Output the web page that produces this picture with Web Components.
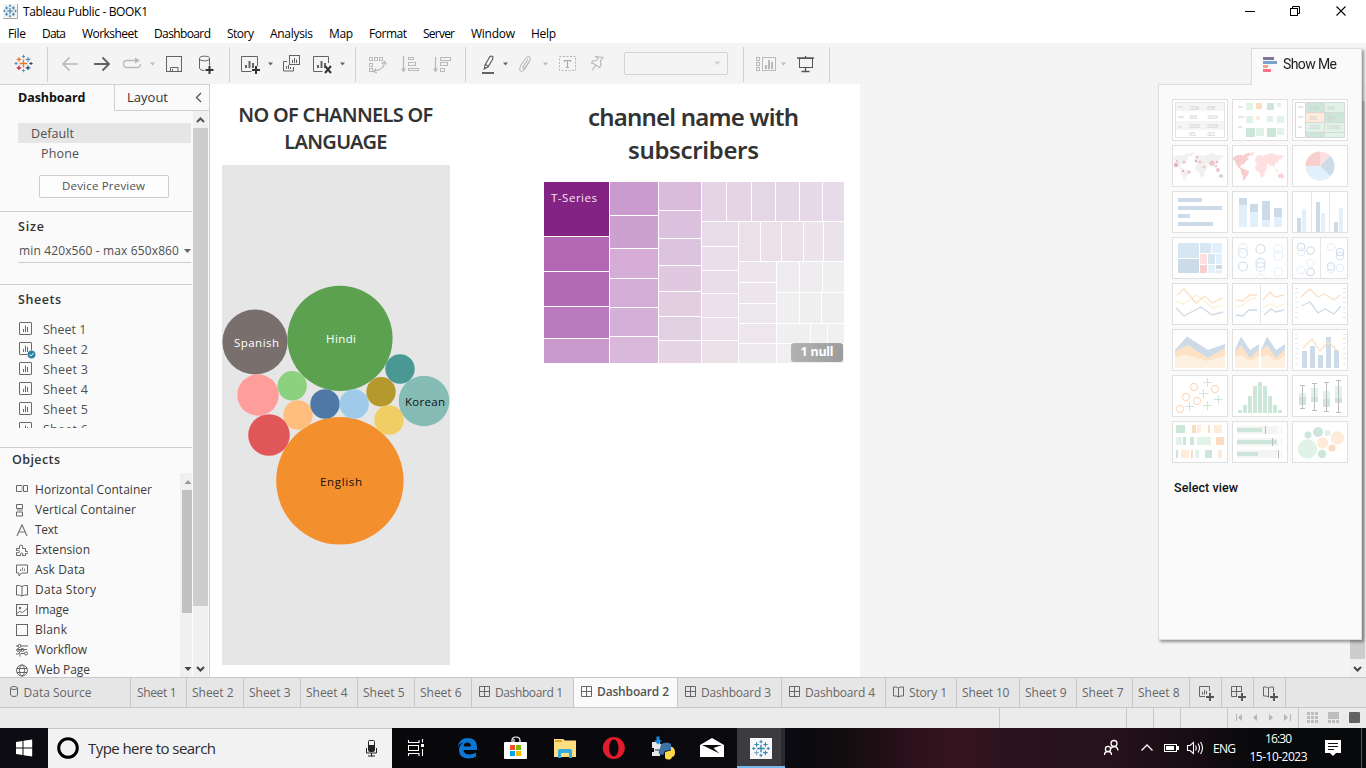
<!DOCTYPE html>
<html lang="en">
<head>
<meta charset="utf-8">
<title>Tableau Public - BOOK1</title>
<style>
html,body{margin:0;padding:0;width:1366px;height:768px;overflow:hidden;background:#fff;font-family:"Open Sans","Noto Sans",sans-serif}
</style>
</head>
<body>
<tp-app></tp-app>
<script>
/* Lays drawings and labels out left to right; every item knows its start and width on the bar. */
function strip(start, items, top, height) {
  let at = start, out = '';
  for (const it of items) {
    const ml = (it.x - at).toFixed(2);
    if (it.t !== undefined) {
      out += `<fit-text w="${it.w}" style="margin-left:${ml}px;${it.s || ''}">${it.t}</fit-text>`;
    } else if (it.sep) {
      out += `<i class="sep" style="margin-left:${ml}px"></i>`;
      it.w = 1;
    } else {
      out += svg(it.x, top, it.w, height, it.g, `margin-left:${ml}px`);
    }
    at = it.x + it.w;
  }
  return out;
}
function svg(x, y, w, h, g, style = '') {
  return `<svg width="${w}" height="${h}" viewBox="${x} ${y} ${w} ${h}" style="flex:none;display:block;${style}" fill="none">${g}</svg>`;
}
const rect = (x, y, w, h, f, extra = '') => `<rect x="${x}" y="${y}" width="${w}" height="${h}" fill="${f}" ${extra}/>`;
const box = (x, y, w, h, c, sw = 1) => `<rect x="${x + .5}" y="${y + .5}" width="${w - 1}" height="${h - 1}" stroke="${c}" stroke-width="${sw}"/>`;
const line = (d, c, w = 1, e = '') => `<path d="${d}" stroke="${c}" stroke-width="${w}" ${e}/>`;
const fill = (d, c) => `<path d="${d}" fill="${c}"/>`;
const caret = (x, y, c, w = 5) => fill(`M${x - w / 2} ${y - 1.5}h${w}l${-w / 2} 3z`, c);
const plus = (cx, cy, r, c, w = 1) => line(`M${cx - r} ${cy}h${2 * r}M${cx} ${cy - r}v${2 * r}`, c, w);
function logo(cx, cy, k, c) {
  return plus(cx, cy, 3.6 * k, c[0], 1.3 * k) +
    [[0, -6.5, 1], [0, 6.5, 2], [-6.9, 0, 1], [6.9, 0, 3]].map(p => plus(cx + p[0] * k, cy + p[1] * k, 1.5 * k, c[p[2]], k)).join('') +
    [[-4.2, -3.8, 0], [4.2, -3.8, 1], [-4.2, 4, 4], [4.2, 4, 3]].map(p => plus(cx + p[0] * k, cy + p[1] * k, 2.1 * k, c[p[2]], 1.1 * k)).join('');
}

class FitText extends HTMLElement {
  connectedCallback() {
    if (!this.shadowRoot) {
      this.attachShadow({mode: 'open'}).innerHTML = '<style>:host{display:inline-block;white-space:nowrap;flex:none}</style><slot></slot>';
    }
    const want = +this.getAttribute('w');
    this.style.letterSpacing = '0px';
    const r = document.createRange();
    r.selectNodeContents(this);
    const nat = r.getBoundingClientRect().width;
    const n = this.textContent.length;
    this.style.letterSpacing = ((want - nat) / Math.max(1, n - 1)).toFixed(3) + 'px';
    this.style.width = want + 'px';
  }
}
customElements.define('fit-text', FitText);

function define(name, render) {
  customElements.define(name, class extends HTMLElement {
    connectedCallback() {
      if (!this.shadowRoot) this.attachShadow({mode: 'open'}).innerHTML = render(this);
    }
  });
}

define('tp-title', () => `<style>:host{display:flex;height:23px;background:#fff;align-items:center;font-size:12px;color:#000}</style>` +
  strip(0, [
    {x: 3, w: 16, g: rect(3, 4, 15, 15, '#f3f3f3') + line('M17.5 4v14.5H3', '#aaa') + logo(10, 11, .8, ['#2f7fae', '#2f7fae', '#2f7fae', '#2f7fae', '#2f7fae'])},
    {x: 23, w: 125, t: 'Tableau Public - BOOK1'},
    {x: 1244, w: 12, g: line('M1245 11.5h10', '#000')},
    {x: 1289, w: 12, g: box(1290, 8, 8, 8, '#000') + line('M1292.5 8v-1.500h7v7h-1.500', '#000')},
    {x: 1335, w: 12, g: line('M1336.500 6.500l9 9m0-9l-9 9', '#000', 1.1)}
  ], 0, 23));

define('tp-menu', () => `<style>:host{display:flex;height:20px;background:#fff;padding-left:8px;gap:16px;font-size:12px;line-height:21px;color:#000}</style>` +
  [['File', 18], ['Data', 24], ['Worksheet', 56], ['Dashboard', 57], ['Story', 27], ['Analysis', 43], ['Map', 24], ['Format', 38], ['Server', 32], ['Window', 44], ['Help', 25]]
    .map(m => `<fit-text w="${m[1]}">${m[0]}</fit-text>`).join(''));

define('tp-toolbar', () => {
  const D = '#636363', L = '#b9b9b9';
  const bars = (x, y, c) => rect(x, y + 5, 2, 3, c) + rect(x + 3.500, y + 1, 2, 7, c) + rect(x + 7, y + 3, 2, 5, c);
  return `<style>:host{display:flex;height:41px;background:#f4f4f4;align-items:center}.sep{flex:none;width:1px;height:35px;background:#d0d0d0;margin-top:2px}
  .combo{flex:none;box-sizing:border-box;width:104px;height:23px;border:1px solid #d3d3d3;border-radius:2px;margin-left:19px;display:flex;align-items:center;justify-content:flex-end;padding-right:6px}</style>` +
  strip(0, [
    {x: 14, w: 20, g: logo(23.5, 63.5, 1.08, ['#e8762b', '#5b8db8', '#7099a6', '#1f457e', '#c72037'])},
    {x: 47, sep: 1},
    {x: 61, w: 18, g: line('M78 64H63M69.500 57.500L63 64l6.500 6.500', L, 1.7)},
    {x: 93, w: 18, g: line('M94 64h15M102.500 57.500L109 64l-6.500 6.500', D, 1.9)},
    {x: 122, w: 20, g: line('M137 60.500h-10q-3.500 0-3.500 3.500t3.500 3.500h10q3.500 0 3.500-3.500', L, 1.3) + fill('M135 57.500v6l5-3z', L)},
    {x: 148, w: 9, g: caret(152.5, 64, L)},
    {x: 166, w: 16, g: box(166, 56, 16, 16, D) + line('M170.500 72v-4.500h7.500v4.500M172.500 69v3', D)},
    {x: 198, w: 17, g: line('M199.500 58.500v10q1 2 5 2M209.500 58.500v7', D) + `<ellipse cx="204.500" cy="58.500" rx="5" ry="2.300" stroke="${D}"/>` + plus(209.500, 70, 4, '#333', 2)},
    {x: 229, sep: 1},
    {x: 241, w: 20, g: line('M257.500 66v-9.500h-16v15h10', D) + bars(245, 60, D) + plus(256, 70, 4, '#333', 2)},
    {x: 266, w: 9, g: caret(270.5, 64, D)},
    {x: 282, w: 18, g: box(289, 55, 11, 10, D) + line('M287 61.500h-3.500v9.500h10v-4', D) + line('M292.500 60v3M294.500 58v5M296.500 59.500v3.500M286.500 66v3M288.500 65v4M290.500 67v2', D)},
    {x: 313, w: 19, g: line('M328.500 63v-6.500h-15v15h9', D) + bars(317, 60, D) + line('M325 66l6 7m0-7l-6 7', '#333', 2)},
    {x: 338, w: 9, g: caret(342.5, 64, D)},
    {x: 355, sep: 1},
    {x: 368, w: 19, g: box(369, 57, 4, 4, L) + box(374, 57, 4, 4, L) + box(379, 57, 4, 4, L) + box(369, 63, 4, 4, L) + box(369, 68, 4, 4, L) + line('M384.500 62q0 7.500-10 9M381.500 64l3-2.500 2 3M376 68.500l-2.500 3 3.500 1.500', L, 1.2)},
    {x: 400, w: 19, g: line('M403.500 56v13', L, 1.3) + fill('M401 68.500h5l-2.500 4z', L) + box(408, 57, 6, 3, L) + box(408, 62, 8, 4, L) + box(408, 68, 11, 3, L)},
    {x: 432, w: 20, g: line('M435.500 57v12', L, 1.3) + fill('M433 68.500h5l-2.500 4z', L) + box(440, 57, 11, 4, L) + box(440, 62, 8, 4, L) + box(440, 68, 5, 4, L)},
    {x: 465, sep: 1},
    {x: 481, w: 14, g: line('M485 65l5-8.500q1.500-1 3 .5l-.5 2.500-4.500 7.500-3.500 1.500zM485.500 64.500l3 2', D, 1.2) + fill('M483 70l1.500-3 2 1.500z', D) + rect(482, 72, 12, 2, D)},
    {x: 501, w: 9, g: caret(505.5, 64, D)},
    {x: 518, w: 15, g: line('M528 59l-5 8q-.5 2 1 1.500 1-.5 6-8.500 1-3-1.500-3.500-2-.3-8 9.500-1.500 4 0 5 2 1 4-1.500l5-8', L, 1.1)},
    {x: 541, w: 9, g: caret(545.5, 64, L)},
    {x: 559, w: 17, g: `<rect x="559.500" y="56.500" width="16" height="14" stroke="${L}" stroke-dasharray="2 1.500"/>` + line('M564.500 62v-1.500h6v1.500M567.500 60.500v7M566 67.500h3', '#aaa', 1.2)},
    {x: 591, w: 14, g: line('M596 56.500l7 1-2.500 3.500.500 4.500-1.500 2-6-4-2-.5 1-2 4-.5 1.500-2zM595.500 65.500l-3.500 5', L, 1.2)}
  ], 43, 41) + `<span class="combo">${svg(0, 0, 7, 5, fill('M.5 .5h6l-3 3.500z', '#cfcfcf'))}</span>` +
  strip(728, [
    {x: 743, sep: 1},
    {x: 755, w: 22, g: box(756, 57, 4, 4, L) + box(756, 62, 4, 4, L) + box(756, 67, 4, 4, L) + box(762, 57, 14, 14, L) + rect(765, 65, 2, 4, L) + rect(768, 60, 2, 9, L) + rect(771, 62, 2, 7, L)},
    {x: 779, w: 9, g: caret(783.5, 64, L)},
    {x: 796, w: 20, g: line('M797 58h17M805.500 56v2M805.500 67v4.500M801.500 71.500h8', '#555', 1.3) + box(799, 58, 14, 10, '#555')},
    {x: 829, sep: 1}
  ], 43, 41);
});

const sheetIcon = `<g stroke="#6a6a6a"><rect x=".5" y=".5" width="12" height="12" rx=".5"/><path d="M4.500 7v3M6.500 3.500V10M8.500 5v5"/></g>`;

define('tp-sidebar', () => {
  const G = '#666';
  const obj = [
    ['Horizontal Container', 117, '<path d="M.5 1.500h5v6h-5zM7.500 1.500h4v6h-4z" stroke="#666"/><path d="M5 2h2v5H5z" fill="#ccc"/>'],
    ['Vertical Container', 101, '<path d="M.5 .5h6v4h-6zM.5 8h6v4h-6z" stroke="#666"/><path d="M1 5h6v2H1z" fill="#bbb"/>'],
    ['Text', 23, '<path d="M1 12L6 .8l5 11.200M2.800 8h6.400" stroke="#777" stroke-width="1.200"/>'],
    ['Extension', 55, '<path d="M.5 11.500v-3q3 1 3-1t-3-1V4.500h3q-1-3.500 1.500-3.500T6.500 4.500h3v3q2.500-.8 2.500 1t-2.500 1v2h-3q1-2.500-.8-2.500t-1 2.500z" stroke="#666"/>'],
    ['Ask Data', 50, '<path d="M.5 1h11v8h-6l-2.500 3V9H.5z" stroke="#666"/><path d="M4.500 7V5M6.500 7V3.500M8.500 7V4.500" stroke="#888"/>'],
    ['Data Story', 61, '<path d="M6 2.500Q3.500 1 .5 1.500v9.500q3-.5 5.500 1 2.500-1.500 5.500-1V1.500Q8.500 1 6 2.500zV12" stroke="#666"/>'],
    ['Image', 34, '<rect x=".5" y=".5" width="11" height="11" stroke="#666"/><path d="M1 9.500l2.500-2 3 1 4.500-4" stroke="#666"/><circle cx="4" cy="4" r="1.300" fill="#777"/>'],
    ['Blank', 32, '<rect x=".5" y=".5" width="11" height="11" stroke="#666"/>'],
    ['Workflow', 52, '<path d="M0 2h3M5 2h7M1 5.500h10M8.500 9.500H5M0 10h2.500l4-6" stroke="#666"/><circle cx="3.500" cy="2" r="1.500" stroke="#666"/><circle cx="10" cy="9.500" r="1.500" stroke="#666"/><circle cx="2" cy="6" r="1.300" stroke="#666"/><circle cx="6.500" cy="6" r="1.500" stroke="#666"/><path d="M4 9v3.500" stroke="#666"/>'],
    ['Web Page', 55, '<circle cx="6" cy="6.500" r="5.500" stroke="#666"/><ellipse cx="6" cy="6.500" rx="2.500" ry="5.500" stroke="#666"/><path d="M1 4.500h10M1 8.500h10" stroke="#666"/>']
  ];
  return `<style>
  :host{display:flex;flex-direction:column;width:209px;height:593px;border-right:1px solid #d0d0d0;background:#fafafa;color:#505050;font-size:12.5px;flex:none;overflow:hidden}
  *{box-sizing:border-box}
  .tabs{display:flex;height:27px;border-top:1px solid #d0d0d0;flex:none;color:#333;line-height:25px}
  .t1{width:114px;padding-left:18px;font-weight:700;color:#111}
  .t2{flex:1;border-left:1px solid #d0d0d0;border-bottom:1px solid #d0d0d0;padding-left:12px;display:flex;align-items:center;font-size:13px}
  .body{display:flex;flex:1;min-height:0}
  .col{width:193px;display:flex;flex-direction:column;flex:none}
  section{border-bottom:1px solid #ccc;width:192px;flex:none}
  .dev{height:101px;padding:12px 0 0 18px;line-height:20px}
  .sel{background:#e6e6e6;width:173px;padding-left:13px;height:20px;line-height:21px}
  .ph{padding-left:23px;height:20px;line-height:21px}
  .btn{margin:12px 0 0 21px;width:130px;height:23px;border:1px solid #ccc;border-radius:2px;background:#fdfdfd;font-size:11.5px;line-height:19px;padding-left:22px}
  b{display:block;font-weight:600;color:#333}
  .size{height:73px;padding:5px 0 0 18px;line-height:20px}
  .drop{width:173px;height:23px;margin-top:3px;border-bottom:1px solid #ccc;display:flex;align-items:center;font-size:12px;padding-left:1px}
  .sheets{height:163px;padding:5px 0 0 18px;line-height:20px}
  .list{height:109px;margin-top:9px;overflow:hidden}
  .li{height:20px;display:flex;align-items:center;gap:11px;padding-left:1px}
  .li fit-text{padding-top:2px}
  .ic{width:13px;height:14px;position:relative}
  .ok{position:absolute;left:8px;top:8px}
  .objs{display:flex;flex:1;min-height:0}
  .ol{width:180px;padding:7px 0 0 16px;color:#3a3a3a;font-size:12px}
  .ol div{height:20px;display:flex;align-items:center;gap:7px}
  .ol fit-text{padding-bottom:2px}
  .h2{height:25px;padding-left:12px;line-height:23px;flex:none}
  .sb{display:flex;flex-direction:column;align-items:center;background:#f0f0f0}
  .s1{width:12px;padding-top:6px}.s2{width:15px}
  </style>
  <div class="tabs"><div class="t1"><fit-text w="67.500">Dashboard</fit-text></div><div class="t2"><fit-text w="41">Layout</fit-text>${svg(0, 0, 7, 11, line('M6 1L1.500 5.500 6 10', '#555', 1.3), 'margin-left:27px')}</div></div>
  <div class="body"><div class="col">
   <section class="dev"><div class="sel"><fit-text w="43">Default</fit-text></div><div class="ph"><fit-text w="38">Phone</fit-text></div><div class="btn"><fit-text w="83">Device Preview</fit-text></div></section>
   <section class="size"><b><fit-text w="26">Size</fit-text></b><div class="drop"><fit-text w="160">min 420x560 - max 650x860</fit-text>${svg(0, 0, 7, 4, fill('M0 0h7l-3.500 4z', G), 'margin-left:5px')}</div></section>
   <section class="sheets"><b><fit-text w="43">Sheets</fit-text></b><div class="list">${[1, 2, 3, 4, 5, 6].map(n => `<div class="li"><span class="ic">${svg(0, 0, 13, 13, sheetIcon)}${n == 2 ? `<span class="ok">${svg(0, 0, 9, 9, '<circle cx="4.500" cy="4.500" r="4.300" fill="#2f7ea3" stroke="#fff" stroke-width=".6"/><path d="M2.500 4.500l1.500 1.500 2.500-3" stroke="#fff"/>')}</span>` : ''}</span><fit-text w="${n == 1 ? 43.5 : 45}">Sheet ${n}</fit-text></div>`).join('')}</div></section>
   <b class="h2"><fit-text w="48">Objects</fit-text></b>
   <div class="objs"><div class="ol">${obj.map(o => `<div>${svg(0, 0, 12, 13, o[2])}<fit-text w="${o[1]}">${o[0]}</fit-text></div>`).join('')}</div>
    <div class="sb s1">${svg(0, 0, 12, 198, fill('M4.500 5h7l-3.500-4z', '#999') + rect(2, 11, 10, 123, '#c1c1c1') + fill('M4.500 188h7l-3.500 4z', '#444'))}</div></div>
  </div>
  <div class="sb s2">${svg(193, 111, 15, 566, line('M197 122l3.500-3.500 3.500 3.500', '#555', 2) + rect(193, 128, 15, 478, '#cdcdcd') + line('M197 667l3.500 3.500 3.500-3.500', '#444', 2))}</div></div>`;
});

define('tp-bubbles', () => {
  const c = [[340, 338.300, 52.600, '#5ba150'], [255, 342, 32.600, '#79706e'], [339.900, 480.800, 63.700, '#f38f2c'], [258, 395, 20.700, '#ff9d9a'], [292.200, 385.800, 14.700, '#8cd17d'], [298, 415, 14.700, '#ffbe7d'], [269, 435, 20.800, '#e15759'], [325, 404, 14.700, '#4e79a7'], [354.200, 404, 14.700, '#a0cbe8'], [381, 391.800, 14.700, '#b6992d'], [389, 420, 14.700, '#f1ce63'], [400, 369, 14.700, '#499894'], [424, 401, 25.300, '#86bcb6']];
  const t = [['Hindi', 326, 343.300, 30, '#fff'], ['Spanish', 234, 347, 45, '#fff'], ['English', 320, 486, 42, '#111'], ['Korean', 405, 406, 40, '#111']];
  return `<style>:host{display:block;width:228px;height:500px;background:#e6e6e6}text{font-family:"Open Sans","Noto Sans",sans-serif;font-size:11.5px}</style>` +
    svg(222, 165, 228, 500, c.map(k => `<circle cx="${k[0]}" cy="${k[1]}" r="${k[2]}" fill="${k[3]}"/>`).join('') + t.map(k => `<text x="${k[1]}" y="${k[2]}" textLength="${k[3]}" fill="${k[4]}">${k[0]}</text>`).join(''));
});

define('tp-treemap', () => {
  let g = '';
  const col = (x0, x1, ys, cs) => cs.forEach((c, i) => { const e = i == cs.length - 1 ? 363 : ys[i + 1] - 1; g += rect(x0, ys[i], x1 - x0, e - ys[i], c); });
  const row = (y0, y1, xs, cs) => cs.forEach((c, i) => { const e = i == cs.length - 1 ? 844 : xs[i + 1] - 1; g += rect(xs[i], y0, e - xs[i], y1 - y0, c); });
  col(544, 609, [182, 237, 272, 307, 339], ['#832384', '#b167b1', '#b16bb4', '#bb7abd', '#ca99cc']);
  col(610, 658, [182, 216, 249, 279, 308, 337], ['#ca9ccd', '#cda1cf', '#d5acd6', '#d4add6', '#d4afd7', '#dab8dc']);
  col(659, 701, [182, 211, 239, 266, 292, 317, 341], ['#dbbbdc', '#ddc2df', '#dcc4de', '#e0c9e0', '#e2cde1', '#e1cfe2', '#e4d4e4']);
  row(182, 221, [702, 727, 752, 776, 800, 823], ['#e5d4e6', '#e5d4e6', '#e5d6e6', '#e5d7e6', '#e8d9e8', '#e8dbe9']);
  col(702, 738, [222, 247, 271, 294, 318, 341], ['#e8dce9', '#e9deea', '#eaddea', '#ebdfeb', '#ebe0e9', '#ebe0e8']);
  row(222, 261, [739, 761, 782, 804, 824], ['#ebe0e8', '#ecdfe8', '#ebe0e8', '#ebe4eb', '#ebe3ea']);
  col(739, 776, [262, 283, 304, 324, 344], ['#ece6ec', '#ece5eb', '#ece6ed', '#ede7ed', '#eee9ef']);
  row(262, 292, [777, 800, 823], ['#eeecef', '#eeecef', '#eeefee']);
  row(293, 323, [777, 800, 822], ['#efefef', '#efefef', '#efefef']);
  row(324, 343, [777, 811, 828], ['#efefef', '#f0f0f0', '#f0f0f0']);
  row(344, 363, [777, 811, 827], ['#efefef', '#f0f0f0', '#f0f0f0']);
  return `<style>:host{display:block;position:relative;width:300px;height:181px}text{font-family:"Open Sans","Noto Sans",sans-serif;font-size:11.5px}
  .n{position:absolute;right:1px;bottom:1px;width:52px;height:19px;border-radius:3px;background:linear-gradient(90deg,rgba(145,145,145,.65),rgba(120,120,120,.7));color:#fff;font-weight:700;font-size:12.5px;line-height:18px;text-align:center}</style>` +
    svg(544, 182, 300, 181, g + '<text x="551" y="202" textLength="46" fill="#f7e6f7">T-Series</text>') + '<span class="n"><fit-text w="33">1 null</fit-text></span>';
});

define('tp-canvas', () => `<style>:host{display:flex;width:650px;height:593px;background:#fff;flex:none;color:#333;font-weight:600;font-family:"Noto Sans","Open Sans",sans-serif}
  .a{width:228px;margin-left:12px;text-align:center;font-size:20px;line-height:27px;padding-top:17px;display:flex;flex-direction:column;align-items:center}
  .a tp-bubbles{margin-top:10px;font-weight:400}
  .b{width:300px;margin-left:94px;font-size:24px;line-height:33px;padding-top:16px;display:flex;flex-direction:column;align-items:center}
  .b tp-treemap{margin-top:16px;font-weight:400}
  fit-text{margin-right:1px}</style>
  <div class="a"><fit-text w="195">NO OF CHANNELS OF</fit-text><fit-text w="103">LANGUAGE</fit-text><tp-bubbles></tp-bubbles></div>
  <div class="b"><fit-text w="211">channel name with</fit-text><fit-text w="131">subscribers</fit-text><tp-treemap></tp-treemap></div>`);

define('tp-thumb', el => {
  const B = '#cddae8', S = '#e2f0fb', G = '#cde6da', H = '#e1f2e8', O = '#fbdcc0', P = '#ffebd8', R = '#f7cfcd', Q = '#ffe0e0', N = '#e6e6e6';
  const pl = (p, c, w = 1.300) => `<polyline points="${p}" stroke="${c}" stroke-width="${w}"/>`;
  const ring = (x, y, c) => `<circle cx="${x}" cy="${y}" r="4.500" stroke="${c}" stroke-width="1.100"/>`;
  const dot = (x, y, r, c) => `<circle cx="${x}" cy="${y}" r="${r}" fill="${c}"/>`;
  const tx = (x, y, s, w) => `<text x="${x}" y="${y}" textLength="${w}" font-size="5.500" fill="#d2d2d2" font-family="Liberation Sans, sans-serif">${s}</text>`;
  /* simplified continents: the Americas, Eurasia, Africa, Australia */
  const west = 'M2 12l3-2h5l1 1 2-2 3-1 4 0-3 3-2 1 2 2-3 2-2 3-3 1-1 2 2 1 4 2 3 1-1 4-2 2-2 4-1-1 0-4-2-3 0-3-3-3-2-3-1-3-3-2z';
  const east = 'M23 14l2-3 3-1.500 2 1.500 5-1.500 5-1.500 3 1.500 8 1 1 1.500-3 1 0 2-2-1-1 3-3 2-1 4-2-3-1.500 2-2-3.500-2 .5 1 2 0 2-2.500 3-.5 4-2.500 3-1.500-1-1-4.500-3.500-2-1-3 2-3.500-1.500-1zM17 10l2-2.500 4-.5-2 3-2 1.500z';
  const aus = 'M46 30l3-2 3 2v3l-2 .5-4-1zM43 24l3 1-1 2z';
  const map = (a, b, c) => fill(west, a) + fill(east, b) + fill(aus, c);
  const k = {
    table: rect(3, 3, 50, 9, '#f5f5f5') + rect(3, 22, 50, 9, '#f5f5f5') + box(3, 3, 50, 36, '#e5e5e5') +
      rect(6, 7, 5, 2, N) + rect(6, 17, 6, 2, N) + rect(6, 27, 4, 2, N) + tx(17, 11, '1234', 10) + tx(35, 11, '678', 8) + tx(17, 20, '368', 8) + tx(35, 20, '3034', 11) + tx(17, 29, '2620', 11) + tx(35, 29, '2558', 11) + tx(17, 37, '971', 7) + tx(35, 37, '322', 8),
    heat: rect(6, 7, 5, 2, N) + rect(6, 17, 6, 2, N) + rect(6, 27, 4, 2, N) + rect(14, 4, 7, 7, H) + rect(24, 4, 6, 6, O) + rect(35, 4, 7, 7, G) + rect(45, 4, 4, 4, H) + rect(14, 17, 7, 7, H) + rect(24, 17, 4, 4, P) + rect(35, 17, 6, 6, H) + rect(45, 17, 7, 7, H) + rect(14, 29, 9, 9, G) + rect(24, 29, 8, 8, H) + rect(35, 29, 9, 9, G) + rect(45, 29, 7, 7, H),
    high: rect(3, 3, 50, 36, '#d9d9d9') + rect(4, 4, 9, 34, '#fff') + rect(14, 4, 18, 9, G) + rect(33, 4, 19, 9, H) + rect(14, 14, 18, 9, P) + rect(33, 14, 19, 9, G) + rect(14, 24, 18, 9, H) + rect(33, 24, 19, 9, H) + rect(14, 34, 18, 4, G) + rect(33, 34, 19, 4, H) + rect(6, 7, 5, 2, N) + rect(6, 17, 5, 2, N) + rect(6, 27, 4, 2, N) + tx(17, 11, '1234', 10) + tx(35, 11, '546', 8) + tx(17, 21, '368', 8) + tx(35, 21, '340', 8) + tx(17, 30, '2620', 11) + tx(35, 30, '53890', 14),
    smap: map('#f1f1f1', '#f1f1f1', '#f1f1f1') + [[4, 20, 2.2], [5, 16, 1.2], [12, 17, 1.5], [11, 26, 1.2], [17, 27, 1.7], [25, 12, 1.6], [24, 16, 1.3], [28, 17, 1.5], [40, 18, 2.6], [45, 17, 1.2], [44, 21, 1.2], [46, 25, 1.9], [49, 31, 1.2], [32, 22, 1.3]].map((d, i) => dot(d[0], d[1], d[2], i % 3 ? '#efc3c7' : '#e9b3bc')).join(''),
    fmap: map(R, Q, '#f9d4d2'),
    pie: fill('M28 21V6.500A14.500 14.500 0 0 1 38.200 10.700z', Q) + fill('M28 21L38.200 10.700A14.500 14.500 0 0 1 38.200 31.300z', B) + fill('M28 21L38.200 31.300A14.500 14.500 0 0 1 13.500 21z', S) + fill('M28 21H13.500A14.500 14.500 0 0 1 28 6.500z', R),
    hbar: rect(6, 7, 24, 4, B) + rect(6, 15, 44, 4, B) + rect(6, 23, 12, 4, B) + rect(6, 31, 35, 4, B),
    stack: rect(7, 7, 8, 7, B) + rect(7, 14, 8, 22, S) + rect(18, 13, 8, 8, B) + rect(18, 21, 8, 15, S) + rect(30, 10, 8, 19, B) + rect(30, 29, 8, 7, S) + rect(42, 17, 8, 9, B) + rect(42, 26, 8, 10, S),
    side: rect(19, 1, 1, 40, N) + rect(37, 1, 1, 40, N) + rect(5, 27, 4, 14, B) + rect(10, 18, 4, 23, S) + rect(24, 11, 4, 30, B) + rect(29, 22, 4, 19, S) + rect(42, 31, 4, 10, B) + rect(47, 17, 4, 24, S),
    tree: rect(6, 6, 21, 15, '#d8e6f2') + rect(6, 22, 21, 14, B) + rect(28, 6, 11, 10, '#d8e6f2') + rect(40, 6, 10, 10, S) + rect(28, 17, 7, 10, Q) + rect(28, 28, 7, 8, R) + rect(36, 17, 7, 10, '#d8e6f2') + rect(44, 17, 6, 10, S) + rect(36, 28, 7, 8, S) + rect(44, 28, 6, 4, B) + rect(44, 33, 6, 3, S),
    circ: ring(11, 11, S) + ring(11, 16, '#d5e3ef') + ring(11, 29.500, B) + ring(28.500, 12, B) + ring(28.500, 26, B) + ring(28.500, 30, '#d5e3ef') + `<path d="M24 41q1-4 4.500-4t4.500 4" stroke="${S}"/>` + ring(46.500, 12, S) + ring(46.500, 19, S) + ring(46.500, 35, S),
    scirc: rect(28, 1, 1, 40, N) + [[9, 10, B], [9, 15, S], [18.500, 13.500, B], [18.500, 26, S], [9, 33, S], [18.500, 35, B], [39, 10, S], [48, 15, B], [48, 19, '#d5e3ef'], [39, 29.500, B], [39, 32, S], [48, 31, S]].map(a => `<circle cx="${a[0]}" cy="${a[1]}" r="3.700" stroke="${a[2]}" stroke-width="1.100"/>`).join(''),
    line: pl('4,18 11,21 18,17 24,12 30,16 41,25 51,22', '#fdf0d5') + pl('5,12 12,6 24,20 33,13 40,20 51,15', '#fbe0c4') + pl('4,25 12,33 29,24 40,32 51,29', B),
    dline: rect(28, 1, 1, 40, N) + pl('4,17 11,18 18,12 25,12', '#fbe0c4') + pl('4,24 11,22 18,16 24,15', '#fdf0d5') + pl('4,32 11,33 17,27 25,27', B) + pl('31,17 38,9 43,14 52,12', '#fbe0c4') + pl('31,25 38,21 45,24 52,21', '#fdf0d5') + pl('32,32 39,26 44,29 52,27', B),
    dual: pl('9,14 18,6 26,14 33,11 42,17 48,12', '#fbe0c4') + pl('9,23 18,19 26,30 33,26 42,31 49,23', B) + [5, 9, 14, 19, 24, 29, 34].map(y => rect(3, y, 3, 1, N) + rect(51, y, 3, 1, N)).join(''),
    area: fill('M3 21L15 7.500 36 21 53 15v14H3z', B) + fill('M3 22l13-6 20 13 17-10v14H3z', '#fde2c6') + fill('M3 28l12-2 20 6 18-5v12H3z', '#fdf1e2'),
    darea: [0, 26].map(x => `<g transform="translate(${x})">` + fill('M3 21L9 7.500 18 21 27 15v18H3z', B) + fill('M3 22l6-6 9 13 9-9v13H3z', '#fde2c6') + fill('M3 28l7-2 8 6 9-5v12H3z', '#fdf1e2') + '</g>').join(''),
    combo: rect(10, 22, 5, 17, B) + rect(18, 17, 5, 22, B) + rect(26, 26, 5, 13, B) + rect(34, 8, 5, 31, B) + rect(42, 21, 5, 18, B) + pl('11,19 20,10 28,22 36,13 46,22', '#fbe0c4') + [5, 9, 14, 19, 24, 29, 34].map(y => rect(3, y, 3, 1, N) + rect(51, y, 3, 1, N)).join(''),
    scat: [[22, 12], [43, 14], [14, 22], [25, 26], [8, 34]].map(a => `<circle cx="${a[0]}" cy="${a[1]}" r="3.600" stroke="#fbdcc0" stroke-width="1.200"/>`).join('') + [[35.500, 7.500], [31.500, 18.500], [46.500, 24.500], [35.500, 30.500], [17.500, 31.500]].map(a => plus(a[0], a[1], 4.500, G)).join(''),
    hist: [[6, 3], [11, 8], [16, 17], [21, 27], [26, 31], [31, 27], [36, 17], [41, 8], [46, 3]].map(a => rect(a[0], 38 - a[1], 4, a[1], G)).join(''),
    boxp: [[7, 18, 4, 8, 10, 34], [19, 13, 9, 5, 8, 36], [31, 16, 8, 8, 7, 37], [43, 11, 12, 5, 5, 38]].map(a => rect(a[0], a[1], 7, a[2], H) + rect(a[0], a[1] + a[2], 7, a[3], G) + line(`M${a[0] + 1} ${a[4] + .5}h5M${a[0] + 3.500} ${a[4]}V${a[5]}M${a[0] + 1} ${a[5] - .5}h5`, '#bdbdbd')).join(''),
    gantt: [[4, 4, 9, G], [20, 4, 4, O], [25, 4, 4, P], [36, 4, 2, O], [42, 4, 8, P], [4, 16, 6, H], [11, 16, 3, G], [18, 16, 4, G], [25, 16, 14, H], [44, 16, 8, O], [4, 29, 2, G], [9, 29, 8, P], [19, 29, 2, O], [23, 29, 4, H], [33, 29, 7, G], [46, 29, 4, P]].map(a => rect(a[0], a[1], a[2], 8, a[3])).join(''),
    bullet: [5, 17, 29].map(y => rect(5, y, 46, 8, '#fafafa') + rect(5, y, 40, 8, '#f4f4f4')).join('') + rect(5, 7, 25, 4, G) + rect(5, 19, 40, 4, G) + rect(5, 31, 21, 4, G) + rect(33, 5, 1, 8, '#bbb') + rect(40, 17, 1, 8, '#bbb') + rect(46, 29, 1, 8, '#bbb'),
    pack: dot(15.500, 28, 9.700, H) + dot(26, 11, 5, G) + dot(16, 14, 3.600, G) + dot(35.500, 12, 3, H) + dot(45.500, 17, 6.700, P) + dot(30.500, 22, 5.700, P) + dot(40, 27, 3.600, O) + dot(30, 33, 4.200, G)
  };
  return `<style>:host{display:block;box-sizing:border-box;width:56px;height:42px;background:#fff;outline:1px solid #e0e0e0;outline-offset:-1px;overflow:hidden}</style>` + svg(0, 0, 56, 42, k[el.getAttribute('kind')]);
});

define('tp-showme', () => `<style>:host{display:flex;flex-direction:column;align-items:flex-end;width:204px;height:592px;filter:drop-shadow(2px 2px 1.500px rgba(0,0,0,.4))}
  *{box-sizing:border-box}
  .tab{width:111px;height:37px;background:#fafafa;border:1px solid #ddd;border-bottom:0;display:flex;align-items:center;padding-left:11px;gap:5px;font:14px Roboto,"Open Sans",sans-serif;color:#222;position:relative;z-index:1;padding-bottom:6px}
  .tab fit-text{padding-bottom:1px}
  .p{margin-top:-1px;width:204px;flex:1;background:#fafafa;border:1px solid #ddd;padding:14px 0 0 13px}
  .g{display:grid;grid-template-columns:repeat(3,56px);grid-auto-rows:42px;gap:4px}
  .s{font:500 12.500px Roboto,"Open Sans",sans-serif;color:#111;margin:17px 0 0 2px;line-height:16px}</style>
  <div class="tab">${svg(0, 0, 15, 15, rect(0, 0, 11, 3, '#8074a0') + rect(0, 4, 14, 3, '#7ba2cc') + rect(0, 8, 5, 3, '#f5a57c') + rect(0, 12, 8, 3, '#fc7183'))}<fit-text w="54">Show Me</fit-text></div>
  <div class="p"><div class="g">${'table heat high smap fmap pie hbar stack side tree circ scirc line dline dual area darea combo scat hist boxp gantt bullet pack'.split(' ').map(n => `<tp-thumb kind="${n}"></tp-thumb>`).join('')}</div><div class="s"><fit-text w="64">Select view</fit-text></div></div>`);

define('tp-sheetbar', () => {
  const G = '#666';
  const T = [[130, 'Data Source', 24, 68, 'db'], [186, 'Sheet 1', 137.5, 39.5], [243, 'Sheet 2', 192.5, 41.5], [300, 'Sheet 3', 249.5, 41.5], [357, 'Sheet 4', 306.5, 41.5], [414, 'Sheet 5', 363.5, 41.5], [471, 'Sheet 6', 420.5, 41.5], [573, 'Dashboard 1', 495.5, 68, 'd'], [677, 'Dashboard 2', 597.5, 72, 'd', 1], [781, 'Dashboard 3', 701.5, 70, 'd'], [885, 'Dashboard 4', 805.5, 70, 'd'], [956, 'Story 1', 909.5, 38, 's'], [1019, 'Sheet 10', 962.5, 47.5], [1076, 'Sheet 9', 1025.5, 41.5], [1132, 'Sheet 7', 1082.5, 41.5], [1189, 'Sheet 8', 1138.5, 41.5]];
  let at = 0, out = '';
  const dash = (x, y) => line(`M${x + .5} ${y + .5}h10v10h-10zM${x + 5.500} ${y}v10M${x} ${y + 5.500}h10`, G);
  const book = (x, y) => line(`M${x + 5.500} ${y + 2}q-2-1.500-5-1v9q3-.5 5 1 2-1.500 5-1v-9q-3-.5-5 1v9`, G);
  for (const [end, t, tx, tw, ic, on] of T) {
    const items = [];
    if (ic == 'db') items.push({x: 9, w: 10, g: `<ellipse cx="14" cy="688" rx="3.500" ry="1.500" stroke="${G}"/><path d="M10.500 688v7q1 1.500 3.500 1.500t3.500-1.500v-7" stroke="${G}"/>`});
    if (ic == 'd') items.push({x: at + 7, w: 12, g: dash(at + 7, 686)});
    if (ic == 's') items.push({x: at + 7, w: 12, g: book(at + 7, 686)});
    items.push({x: tx - .5, w: tw, t});
    out += `<div class="t${on ? ' on' : ''}" style="width:${end + 1 - at}px">${strip(at, items, 678, 29)}</div>`;
    at = end + 1;
  }
  [0, 1, 2].forEach(i => {
    const x = at + 9;
    const g = (i == 0 ? line(`M${x + 10.500} 691v-4.500h-10v10h7M${x + 3.500} 692v2.500M${x + 5.500} 690v4.500M${x + 7.500} 691v3`, G) : i == 1 ? dash(x, 686) : book(x, 686)) + `<path d="M${x + 10.500} 692v9m-4.500-4.500h9" stroke="#e6e6e6" stroke-width="4"/>` + plus(x + 11, 697, 4, '#555', 2);
    out += `<div class="t" style="width:32px">${strip(at, [{x: x, w: 17, g}], 678, 29)}</div>`;
    at += 32;
  });
  return `<style>:host{display:flex;box-sizing:border-box;height:31px;background:#e6e6e6;border-top:1px solid #c8c8c8;border-bottom:1px solid #c8c8c8;color:#666;font-size:12px}
  .t{box-sizing:border-box;flex:none;display:flex;align-items:center;border-right:1px solid #c8c8c8;height:29px}.t fit-text{padding-bottom:1px}
  .on{background:#fafafa;color:#555;font-weight:600}.t.on fit-text{padding:0 0 3px}</style>` + out;
});

define('tp-status', () => {
  const L = '#b5b5b5', sq = (x, y) => rect(x, y, 3, 3, '#bdbdbd');
  return `<style>:host{display:flex;height:20px;background:#ebebeb;align-items:center}.sep{flex:none;width:1px;height:20px;background:#c8c8c8}</style>` + strip(0, [
    {x: 999, sep: 1}, {x: 1126, sep: 1}, {x: 1153, sep: 1}, {x: 1180, sep: 1}, {x: 1227, sep: 1},
    {x: 1235, w: 9, g: rect(1236, 714, 1, 7, L) + fill('M1242 714v7l-4-3.500z', L)},
    {x: 1252, w: 7, g: fill('M1257 714v7l-4-3.500z', L)},
    {x: 1268, w: 7, g: fill('M1269 714v7l4-3.500z', L)},
    {x: 1283, w: 9, g: rect(1290, 714, 1, 7, L) + fill('M1284 714v7l4-3.500z', L)},
    {x: 1298, sep: 1},
    {x: 1306, w: 13, g: [0, 1, 2].map(i => [0, 1, 2].map(j => sq(1307 + 4 * i, 712 + 4 * j)).join('')).join('')},
    {x: 1327, w: 13, g: rect(1328, 712, 11, 7, '#bdbdbd') + [0, 1, 2].map(i => sq(1328 + 4 * i, 720)).join('')},
    {x: 1348, w: 13, g: rect(1349, 712, 11, 11, '#636363', 'rx="1"')}
  ], 708, 20);
});

define('tp-taskbar', () => {
  const W = '#fff';
  return `<style>:host{display:flex;height:40px;background:linear-gradient(90deg,#0c0c12 0,#08080b 420px,#0a0a10 800px,#130d0f 850px,#2a111b 905px,#36131f 955px,#29141d 1010px,#26121b 1110px,#170d13 1190px,#08090b 1260px,#08090c 100%);color:#fff;font-size:12px;align-items:center}
  *{box-sizing:border-box}
  .q{width:344px;height:40px;background:#f2f2f2;border-top:1px solid #c4c4c4;display:flex;align-items:center;flex:none;color:#2b2b2b;font-size:15px}
  .q fit-text{padding-bottom:2px}
  .act{width:48px;height:40px;background:linear-gradient(90deg,#3b3b40 44px,#2b2b30 44px);border-bottom:2px solid #76b9ed;flex:none;display:flex;padding-left:12px;margin-left:12px}
  .ck{display:flex;flex-direction:column;align-items:center;width:58px;margin-left:13.5px;line-height:18px;padding-bottom:1px;flex:none}
  </style>` +
  strip(0, [{x: 14, w: 20, g: fill('M16 742l6.500-1v6.500H16zM23.500 740.800l8.700-1.200v7.900h-8.700zM16 748.500h6.500v6.500L16 754zM23.500 748.500h8.700v7.900l-8.700-1.200z', W)}], 728, 40) +
  `<span style="width:14px;flex:none"></span><div class="q">` + strip(48, [
    {x: 56, w: 24, g: '<circle cx="68" cy="748" r="9.300" stroke="#000" stroke-width="3"/>'},
    {x: 88, w: 128, t: 'Type here to search'},
    {x: 365, w: 13, g: '<rect x="368.500" y="740.500" width="6" height="11" rx="1" stroke="#222"/><path d="M369 745h5v6h-5z" fill="#222"/><path d="M366.500 748v5h10v-5M371.500 753v3.500M368 756h7" stroke="#222"/>'}
  ], 729, 39) + `</div>` + strip(392, [
    {x: 407, w: 18, g: line('M408.500 740v2.500h10.500v-2.500M408.500 756v-2.500h10.500v2.500M422.500 739v3.500M422.500 749v7', W, 1.1) + box(408, 745, 11, 6, W) + rect(421, 744, 3, 3, W)},
    {x: 456, w: 22, g: fill('M457.500 747.500Q459 738 468 738q9 .500 9 9v3h-13.500q.5 4.500 6 4.500 3.500 0 6.500-1.700v4Q473 758.500 468 758.500q-9-.5-9-8.500 0-5 4.500-7.500-4 .5-6 5zM463.700 746.500h7.300q0-4-3.600-4t-3.700 4z', '#0b78d7')},
    {x: 503, w: 25, g: line('M512 742v-1.500q0-3.500 4-3.500t4 3.500v1.500M514 742v-3', W, 1.200) + rect(504, 742, 23, 17, W, 'rx="1"') + rect(510, 745, 5, 5, '#f04e23') + rect(516, 745, 5, 5, '#7db900') + rect(510, 751, 5, 5, '#00a3ee') + rect(516, 751, 5, 5, '#ffb901')},
    {x: 553, w: 24, g: fill('M554 739h9l2 1.500h11V757h-22z', '#ffdf82') + rect(555, 740, 7, 2, '#e5a629') + fill('M558 758v-7q0-2 2-2h10q2 0 2 2v7h-3v-4q0-1-1-1h-6q-1 0-1 1v4z', '#33abe2')},
    {x: 602, w: 24, g: '<ellipse cx="613.800" cy="748" rx="11" ry="11" fill="#e31b2e"/><ellipse cx="613.800" cy="748" rx="4.700" ry="8.500" fill="#0a0a0e"/>'},
    {x: 650, w: 26, g: fill('M652 742h5v-2h3v4h4v8h-4v4h-8v-4h2v-4h-2z', '#e8e8e8') + rect(655, 749, 9, 2, '#888') + fill('M656.500 736.500h3v4h2.500l-4 4-4-4h2.500z', '#1a8be0') + fill('M661 744q6-3 10 0v6l-6 1-2 4-4-1q-1-4 1-5.500z', '#3d74a5') + fill('M665 752l6-1.500v-4q4 1 4 6 0 4-3 4.500l-1 2q-4 1.500-6-1z', '#ffd94a')},
    {x: 699, w: 26, g: fill('M700 745l12-7 12 7v12h-24z', W) + fill('M702 745l17.500 8.500-6-5.500 8.500-3z', '#0a0a0e')}
  ], 728, 40) + `<div class="act">` + svg(749, 728, 24, 38, rect(750, 738, 22, 21, '#f6f6f6') + logo(761, 748.500, 1.05, ['#3a87b5', '#3a87b5', '#3a87b5', '#3a87b5', '#76aed0'])) + `</div>` + strip(785, [
    {x: 1103, w: 17, g: '<circle cx="1114" cy="743.500" r="3" stroke="#fff" stroke-width="1.300"/><circle cx="1108" cy="749" r="2.600" stroke="#fff" stroke-width="1.300"/><path d="M1104.500 755q0-3.500 3.500-3.500t3.500 3.500M1111 748.500q1-2 3-2 3.500 0 4 4" stroke="#fff" stroke-width="1.300"/>'},
    {x: 1140, w: 14, g: line('M1141.500 750.500l5.500-5.500 5.500 5.500', W, 1.300)},
    {x: 1163, w: 17, g: box(1164, 744, 13, 8, W) + rect(1166, 746, 8, 4, W) + rect(1177, 746, 2, 4, W)},
    {x: 1186, w: 18, g: line('M1187.500 745.500h2.500l3.500-3v11l-3.500-3h-2.500zM1195.500 745.500q1.500 2.500 0 5M1198 743.500q3 4.500 0 9M1200.500 742q4 6 0 12', W, 1.100)},
    {x: 1213, w: 23, t: 'ENG'}
  ], 728, 40) + `<div class="ck"><fit-text w="27">16:30</fit-text><fit-text w="58">15-10-2023</fit-text></div>` + strip(1307.5, [
    {x: 1324, w: 18, g: fill('M1325 740h16v13h-5l-3 3-3-3h-5z', W) + line('M1328 743.500h10M1328 746.500h10M1328 749.500h6', '#111')},
    {x: 1361, w: 1, g: rect(1361, 728, 1, 40, '#555')}
  ], 728, 40);
});

define('tp-app', () => `<style>
  :host{display:flex;flex-direction:column;width:1366px;height:768px;position:relative;overflow:hidden}
  .m{display:flex;height:593px;background:#f4f4f4;flex:none}
  .v{margin-left:auto;width:16px;background:#f0f0f0}
  tp-showme{position:absolute;left:1158px;top:48px}
  </style>
  <tp-title></tp-title><tp-menu></tp-menu><tp-toolbar></tp-toolbar>
  <div class="m"><tp-sidebar></tp-sidebar><tp-canvas></tp-canvas><div class="v">${svg(1350, 84, 16, 593, rect(1350, 101, 15, 558, '#cdcdcd') + line('M1354 667l3.500 3.500 3.500-3.500', '#444', 2))}</div></div>
  <tp-sheetbar></tp-sheetbar><tp-status></tp-status><tp-taskbar></tp-taskbar><tp-showme></tp-showme>`);
</script>
</body>
</html>
